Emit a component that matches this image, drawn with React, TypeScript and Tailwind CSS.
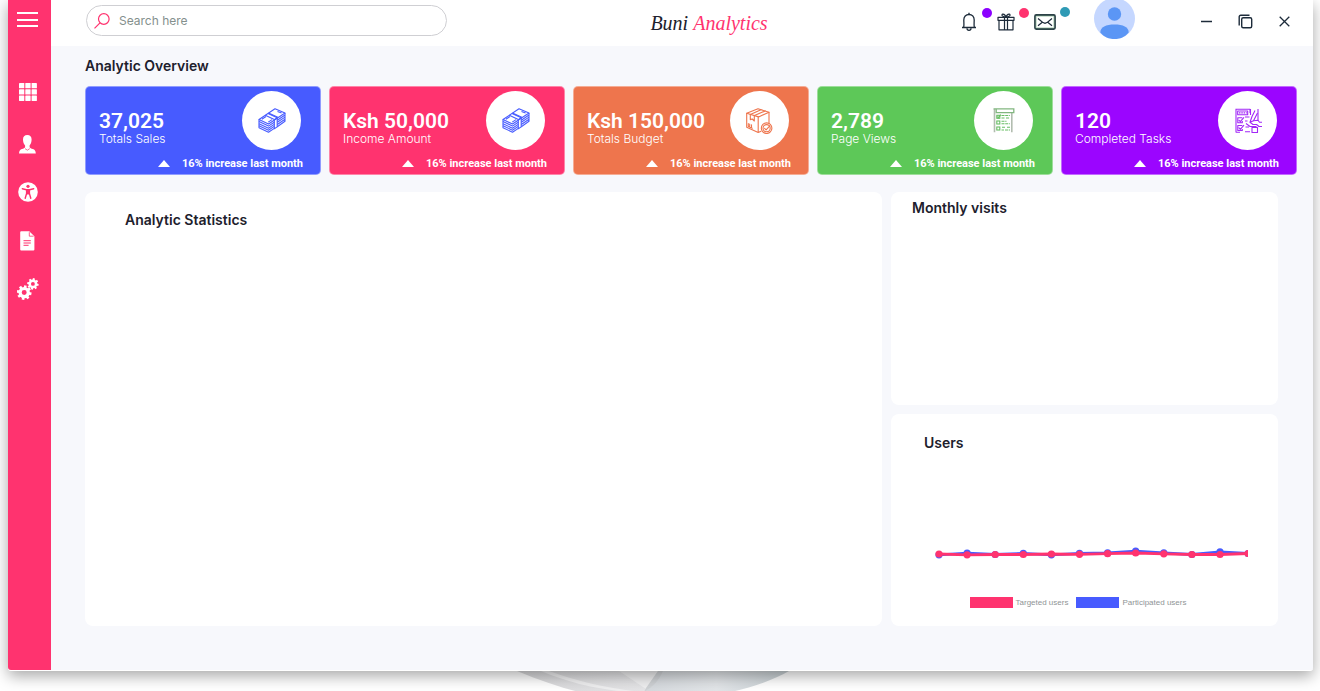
import type { ReactNode } from "react";

function MenuIcon() {
  return (
    <svg width="21" height="16" viewBox="0 0 21 16" fill="#fff" aria-hidden="true">
      <rect y="0" width="21" height="2" />
      <rect y="7" width="21" height="2" />
      <rect y="13" width="21" height="2" />
    </svg>
  );
}

function GridIcon() {
  const steps = [0, 6.3, 12.6];
  return (
    <svg width="18" height="18" viewBox="0 0 18 18" fill="#fff" aria-hidden="true">
      {steps.map((y) => steps.map((x) => <rect key={`${x}-${y}`} x={x} y={y} width="5.3" height="5.3" rx="0.4" />))}
    </svg>
  );
}

function UserIcon() {
  return (
    <svg width="17" height="19" viewBox="0 0 17 19" fill="#fff" aria-hidden="true">
      <path d="M8.3 0c2.8 0 4.3 1.7 4.3 4.4 0 2.5-.8 4.7-2 6v1.9c.4.9 1.7 1.3 3.2 1.8 1.9.6 2.9 1.7 3 4.4H0c.1-2.7 1.1-3.8 3-4.4 1.5-.5 2.7-.9 3.1-1.8v-1.9c-1.3-1.3-2.1-3.5-2.1-6C4 1.700 5.500 0 8.300 0z" />
      <path d="M6 13.600l2.400 1.600 2.400-1.600" fill="none" stroke="#ff336f" strokeWidth="0.7" />
    </svg>
  );
}

function AccessibilityIcon() {
  return (
    <svg width="20" height="20" viewBox="0 0 20 20" aria-hidden="true">
      <circle cx="10" cy="10" r="9.800" fill="#fff" />
      <circle cx="10" cy="4.300" r="1.600" fill="#ff336f" />
      <path
        d="M4.300 6.700L8.400 7.700H11.600L15.700 6.700M8.600 7.700V11.500L7.200 16.300M11.400 7.700V11.500L12.800 16.300M8.600 11.700H11.400M10 7.700V11.700"
        fill="none"
        stroke="#ff336f"
        strokeWidth="1.400"
        strokeLinecap="round"
        strokeLinejoin="round"
      />
    </svg>
  );
}

function FileIcon() {
  return (
    <svg width="15" height="20" viewBox="0 0 15 20" aria-hidden="true">
      <path d="M1.200 0.300H9.200L14.400 5.300V18.600a1 1 0 0 1-1 1H1.200a1 1 0 0 1-1-1V1.300a1 1 0 0 1 1-1z" fill="#fff" />
      <path d="M9.300 1.200V5.200H13.600" fill="none" stroke="#ff336f" strokeWidth="0.8" />
      <path d="M3.500 9.700H10.800M3.500 12H10.800M3.500 14.300H8.600" stroke="#ff336f" strokeWidth="1" />
    </svg>
  );
}

function Gear({ cx, cy, r }: { cx: number; cy: number; r: number }) {
  const angles = [0, 45, 90, 135, 180, 225, 270, 315];
  return (
    <g>
      <circle cx={cx} cy={cy} r={r * 0.56} fill="none" stroke="#fff" strokeWidth={r * 0.44} />
      {angles.map((a) => (
        <rect
          key={a}
          x={cx - r * 0.18}
          y={cy - r}
          width={r * 0.36}
          height={r * 0.36}
          fill="#fff"
          transform={`rotate(${a + 10} ${cx} ${cy})`}
        />
      ))}
    </g>
  );
}

function GearsIcon() {
  return (
    <svg width="22" height="22" viewBox="0 0 22 22" aria-hidden="true">
      <Gear cx={7.2} cy={14.6} r={7.3} />
      <Gear cx={15.9} cy={5.9} r={5.7} />
    </svg>
  );
}

function MoneyIcon() {
  return (
    <svg width="28" height="25" viewBox="0 0 28 25" fill="none" stroke="#475bff" strokeWidth="1.1" strokeLinejoin="round" aria-hidden="true">
      <path d="M1 11.500L17 0.800L27 5L10.500 16z" />
      <path d="M3.800 11.300L8 8.500M10.200 14.100L14 11.600M19.500 3.400L23.600 5.100" />
      <path d="M7.300 7.300L16.300 11.600V20.800L19.200 18.900V9.700L10 5.500" />
      <path d="M10.500 4.900L19.800 9.200M16.300 11.600L19.200 9.700" />
      <path d="M1 11.500V19.700L10.500 24.200L16.300 20.400" />
      <path d="M1 13.600L10.500 18.100L16.200 14.300M1 15.700L10.500 20.200L16.200 16.400M1 17.700L10.500 22.200L16.200 18.400" />
      <path d="M19.300 12.200L27 7V5M19.300 14.300L27 9.100V7M19.300 16.500L27 11.200V9.100M19.300 18.700L27 13.300V11.200" />
    </svg>
  );
}

function BoxIcon() {
  return (
    <svg width="27" height="26" viewBox="0 0 27 26" fill="none" stroke="#ee754d" strokeWidth="1.1" strokeLinejoin="round" strokeLinecap="round" aria-hidden="true">
      <path d="M0.700 5.300L12.600 8.900L23 4.200L12 0.700z" />
      <path d="M0.700 5.300V19.300L12.200 24.500V8.900M23 4.200V15.500M12.200 24.500L15 23.300" />
      <path d="M4.300 6.500L15 1.700M8.500 7.600L19.200 2.900M4.300 6.500V11.600L6.300 11L8.300 13V7.700" />
      <path d="M2.300 15.500V18.400L6.300 20.200M3.700 16V18.100M5.500 16.800V18.900" />
      <circle cx="20.600" cy="20.200" r="5.300" />
      <circle cx="20.600" cy="20.200" r="3.600" />
      <path d="M18.600 20.300L20.100 21.800L23.800 17.800" />
    </svg>
  );
}

function ChecklistIcon() {
  return (
    <svg width="22" height="25" viewBox="0 0 22 25" fill="none" stroke="#68bd64" strokeWidth="1.1" aria-hidden="true">
      <path d="M1.500 1V24.200M18.800 5V24.200" stroke="#b2bdb0" strokeWidth="1.600" />
      <path d="M0.500 0.800H20.800V4.600H3.200V1" stroke="#82b780" strokeWidth="1.300" />
      <rect x="3.800" y="7.300" width="3" height="3" />
      <rect x="3.800" y="13" width="3" height="3" />
      <rect x="3.800" y="19" width="3" height="3" />
      <path d="M4.200 8.600L5.300 9.700L7.900 6.600" />
      <path d="M8.500 7.500H16.800M8.500 10H12M13 10H16.800M8.500 13.200H13.500M8.500 15.800H16.800M9 19.300H12.500M14 19.300H17M8.500 22H11M12 22H17" strokeDasharray="3 0.7" />
    </svg>
  );
}

function TasksIcon() {
  return (
    <svg width="28" height="26" viewBox="0 0 28 26" fill="none" stroke="#a228f7" strokeWidth="1.1" strokeLinejoin="round" aria-hidden="true">
      <path d="M2 0.700V24.500M2 1.200H16V5M24 1V12.500M2 24.300H6M16.500 1V7" />
      <rect x="3.700" y="3" width="10" height="3.800" />
      <path d="M5 4.900H12.800" strokeDasharray="1.500 0.800" />
      <path d="M8.300 9.700H3.800V14.800H8.300V13M4.800 12L6.300 13.700L10 9.300" />
      <path d="M8.300 17.500H3.800V22.500H8.300V21M4.800 19.500L6.300 21.300L10 17.200" />
      <path d="M11 9H15.500M11 13H13.500M11 23.700H16M11.500 19H15" />
      <path d="M21 2.500L18 8.500L16 14.200L19.500 12.800L23.500 5" />
      <path d="M19.500 12.800L24 12.200L25.500 14.300H28M16 14.200L19 16.500H22.500L25 18.500H28M12 15.500L16 18.500H22.500M18 18.500V24.500H23.500V19.500H18" />
    </svg>
  );
}

function BellIcon() {
  return (
    <svg width="16" height="20" viewBox="0 0 16 20" fill="none" stroke="#1d2b3a" strokeWidth="1.300" strokeLinejoin="round" aria-hidden="true">
      <path d="M1 15.500H15M2.700 15.300C3.200 13 2.800 10.800 2.800 8C2.800 4.700 4.800 2.500 8 2.500S13.200 4.700 13.200 8C13.200 10.800 12.800 13 13.300 15.300" />
      <path d="M8 0.800V2.500M6 16.300C6 19.100 10 19.100 10 16.300" />
    </svg>
  );
}

function GiftIcon() {
  return (
    <svg width="18" height="18" viewBox="0 0 18 18" fill="none" stroke="#1d2b3a" strokeWidth="1.200" strokeLinejoin="round" aria-hidden="true">
      <rect x="1" y="4.300" width="16" height="3" />
      <path d="M2 7.500V16.800H16V7.500M7.500 4.500V16.500M10.500 4.500V16.500" />
      <path d="M9 4.300C6.500 3.800 4.500 3 5 1.700C5.600 0.200 8.300 1.500 9 4.300C9.700 1.500 12.400 0.200 13 1.700C13.500 3 11.500 3.800 9 4.300z" />
    </svg>
  );
}

function MailIcon() {
  return (
    <svg width="22" height="16" viewBox="0 0 22 16" fill="none" aria-hidden="true">
      <rect x="1" y="1" width="20" height="14" rx="1.200" stroke="#2c4247" strokeWidth="1.800" />
      <path d="M2.200 2.200H19.800V13.800H2.200z" stroke="#9fc6a8" strokeWidth="0.700" />
      <path d="M4 4.500L8.500 8.300L11 9.300L13.500 8.300L18 4.500M4 11.800L8.300 8.200M18 11.800L13.700 8.200" stroke="#1d2b3a" strokeWidth="1.200" />
    </svg>
  );
}

type IconButtonProps = { label: string; className?: string; children: ReactNode };

function IconButton({ label, className = "", children }: IconButtonProps) {
  return (
    <button type="button" aria-label={label} className={`flex items-center justify-center ${className}`}>
      {children}
    </button>
  );
}

const stats = [
  { value: "37,025", label: "Totals Sales", color: "bg-[#475bff]", icon: <MoneyIcon /> },
  { value: "Ksh 50,000", label: "Income Amount", color: "bg-[#ff336f]", icon: <MoneyIcon /> },
  { value: "Ksh 150,000", label: "Totals Budget", color: "bg-[#ee754d]", icon: <BoxIcon /> },
  { value: "2,789", label: "Page Views", color: "bg-[#5dc858]", icon: <ChecklistIcon /> },
  { value: "120", label: "Completed Tasks", color: "bg-[#9b05ff]", icon: <TasksIcon /> },
];

function StatCard({ value, label, color, icon }: (typeof stats)[number]) {
  return (
    <article className={`h-[89px] rounded-[5px] border border-white/40 bg-clip-border pt-1 pl-[13px] text-white ${color}`}>
      <div className="flex h-[59px] justify-between pr-[19px]">
        <div className="pt-[19px]">
          <p className="font-['Roboto',sans-serif] text-[21px] leading-[22px] font-semibold">{value}</p>
          <p className="text-[12px] leading-[14px] font-light">{label}</p>
        </div>
        <span className="flex size-[59px] items-center justify-center rounded-full bg-white">{icon}</span>
      </div>
      <p className="mt-[7px] flex items-center justify-end gap-3 pr-[17px] font-['Roboto',sans-serif] text-[11px] leading-[14px] font-bold">
        <svg width="12" height="7" viewBox="0 0 12 7" fill="#fff" className="mb-[2px]" aria-hidden="true">
          <path d="M6 0L12 7H0z" />
        </svg>
        16% increase last month
      </p>
    </article>
  );
}

const targeted = [11, 11.8, 11.5, 11.5, 11, 11.3, 10.7, 10, 10.8, 11.5, 11.5, 10.5];
const participated = [11.8, 10.2, 11.5, 10.3, 11.8, 10.4, 9.8, 8.1, 9.8, 11.5, 8.9, 10.5];

function Series({ values, color }: { values: number[]; color: string }) {
  const points = values.map((y, i) => ({ x: 4 + i * 28.1, y }));
  return (
    <g>
      <polyline points={points.map((p) => `${p.x},${p.y}`).join(" ")} fill="none" stroke={color} strokeWidth="2.8" />
      {points.map((p) => (
        <circle key={p.x} cx={p.x} cy={p.y} r="3.6" fill={color} />
      ))}
    </g>
  );
}

function UsersChart() {
  return (
    <svg viewBox="0 0 313 24" className="block w-full" role="img" aria-label="Targeted and participated users">
      <Series values={participated} color="#475bff" />
      <Series values={targeted} color="#ff336f" />
    </svg>
  );
}

export default function App() {
  return (
    <div className="min-h-screen overflow-hidden bg-white pr-[7px] pl-2 font-['Inter',sans-serif] text-[#20202c]">
      <div className="relative z-10 flex rounded-b-[3px] border-b border-white bg-[#f7f8fc] shadow-[0_5px_15px_rgba(0,0,0,0.35)]">
        <nav aria-label="Main" className="flex w-[43px] shrink-0 flex-col rounded-bl-[3px] bg-[#ff336f] pr-1">
          <IconButton label="Menu" className="mb-6 h-10">
            <MenuIcon />
          </IconButton>
          <IconButton label="Dashboard" className="h-14">
            <GridIcon />
          </IconButton>
          <IconButton label="Profile" className="h-12">
            <UserIcon />
          </IconButton>
          <IconButton label="Accessibility" className="h-12">
            <AccessibilityIcon />
          </IconButton>
          <IconButton label="Reports" className="h-[49px]">
            <FileIcon />
          </IconButton>
          <IconButton label="Settings" className="h-12">
            <GearsIcon />
          </IconButton>
        </nav>

        <div className="min-w-0 flex-1">
          <header className="flex h-[46px] justify-between overflow-hidden bg-white pr-[23px] pl-[35px]">
            <label className="mt-[5px] flex h-[31px] w-[361px] items-center gap-2 rounded-full border border-[#cfcfd3] pl-[7px]">
              <svg width="16" height="16" viewBox="0 0 16 16" fill="none" stroke="#ff336f" strokeWidth="1.2" className="shrink-0" aria-hidden="true">
                <circle cx="9.800" cy="6" r="5.300" />
                <path d="M6 9.800L0.500 15.400" />
              </svg>
              <input
                type="search"
                aria-label="Search"
                placeholder="Search here"
                className="w-full bg-transparent pl-px text-[12px] leading-5 outline-none placeholder:text-[#84908d]"
              />
            </label>

            <h1 className="flex h-[46px] items-center pl-[10px] font-['Liberation_Serif',serif] text-[20px] whitespace-nowrap italic">
              Buni&nbsp;<span className="text-[#ff336f]">Analytics</span>
            </h1>

            <div className="flex h-[43px] items-center">
              <IconButton label="Notifications" className="relative mr-5">
                <BellIcon />
                <span className="absolute -top-1 -right-[15px] size-[10px] rounded-full bg-[#8b00ff]" />
              </IconButton>
              <IconButton label="Gifts" className="relative mr-[19px]">
                <GiftIcon />
                <span className="absolute -top-[5px] -right-[14px] size-[10px] rounded-full bg-[#ff336f]" />
              </IconButton>
              <IconButton label="Messages" className="relative mr-[38px]">
                <MailIcon />
                <span className="absolute -top-[7px] -right-[14px] size-[10px] rounded-full bg-[#2f9ab5]" />
              </IconButton>
              <IconButton label="Account" className="mr-[66px] pb-[6px]">
                <svg width="41" height="41" viewBox="0 0 41 41" aria-hidden="true">
                  <circle cx="20.500" cy="20.500" r="20.500" fill="#c5d7ff" />
                  <circle cx="20.500" cy="16" r="6.700" fill="#5b96f5" />
                  <path d="M6.300 34.500C6.300 29 12 26.500 20.500 26.500S34.700 29 34.700 34.500C31 39 26 41 20.500 41S10 39 6.300 34.500z" fill="#5b96f5" />
                </svg>
              </IconButton>
              <div className="flex items-center gap-[26px] text-[#1d2b3a]">
                <IconButton label="Minimize">
                  <svg width="11" height="11" viewBox="0 0 11 11" stroke="currentColor" strokeWidth="1.5" aria-hidden="true">
                    <path d="M0 5.500H11" />
                  </svg>
                </IconButton>
                <IconButton label="Restore">
                  <svg width="15" height="15" viewBox="0 0 15 15" fill="none" stroke="currentColor" strokeWidth="1.4" aria-hidden="true">
                    <rect x="3.700" y="3.700" width="10" height="10" rx="1.500" />
                    <path d="M1.200 11.500V2.700A1.500 1.500 0 0 1 2.700 1.200H11.500" />
                  </svg>
                </IconButton>
                <IconButton label="Close">
                  <svg width="11" height="11" viewBox="0 0 11 11" stroke="currentColor" strokeWidth="1.3" aria-hidden="true">
                    <path d="M0.700 0.700L10.300 10.300M10.300 0.700L0.700 10.300" />
                  </svg>
                </IconButton>
              </div>
            </div>
          </header>

          <main className="pt-[10px] pr-4 pb-11 pl-[34px]">
            <h2 className="mb-[10px] text-[14px] leading-5 font-semibold">Analytic Overview</h2>
            <section className="grid grid-cols-5 gap-2">
              {stats.map((stat) => (
                <StatCard key={stat.label} {...stat} />
              ))}
            </section>

            <div className="mt-[17px] mr-[19px] grid grid-cols-[797fr_387fr] gap-[9px]">
              <section className="rounded-lg bg-white pt-[18px] pl-10">
                <h2 className="text-[14px] leading-5 font-semibold">Analytic Statistics</h2>
              </section>
              <div className="flex flex-col gap-[9px]">
                <section className="min-h-[213px] rounded-lg bg-white pt-[6px] pl-[21px]">
                  <h2 className="text-[14px] leading-5 font-semibold">Monthly visits</h2>
                </section>
                <section className="rounded-lg bg-white pt-[19px] pr-[30px] pb-[17px] pl-[33px]">
                  <h2 className="text-[14px] leading-5 font-semibold">Users</h2>
                  <div className="mt-[90px] pl-[11px]">
                    <UsersChart />
                  </div>
                  <ul className="mt-[30px] flex justify-center gap-2 pr-4 font-['Liberation_Sans',sans-serif] text-[8px] leading-[12px] text-[#8f9496]">
                    <li className="flex gap-[3px]">
                      <span className="h-[11px] w-[43px] bg-[#ff336f]" />
                      Targeted users
                    </li>
                    <li className="flex gap-[3px]">
                      <span className="h-[11px] w-[43px] bg-[#475bff]" />
                      Participated users
                    </li>
                  </ul>
                </section>
              </div>
            </div>
          </main>
        </div>
      </div>

      <div className="flex h-[21px] justify-center overflow-hidden pr-2">
        <svg width="280" height="21" viewBox="0 0 280 21" aria-hidden="true">
          <defs>
            <linearGradient id="petal-left" x1="0" y1="0" x2="1" y2="0">
              <stop offset="0" stopColor="#d8d8da" />
              <stop offset="1" stopColor="#e6e6e8" />
            </linearGradient>
            <linearGradient id="petal-right" x1="0" y1="0" x2="1" y2="0">
              <stop offset="0" stopColor="#d5d9dd" />
              <stop offset="0.5" stopColor="#e2e5e8" />
              <stop offset="1" stopColor="#c6ced2" />
            </linearGradient>
          </defs>
          <path d="M0 0C22 9 42 16 62 21H134L145 0z" fill="url(#petal-left)" />
          <path d="M32 0C56 9 88 17 124 21H112C76 18 48 10 24 0z" fill="#efeff0" />
          <path d="M102 0L129 18L141 0z" fill="#efeff0" />
          <path d="M145 0C141 9 136 15 127 21H214C240 15 258 8 272 0z" fill="url(#petal-right)" />
          <path d="M141 0H146C142 9 137 15 127 21L129 17z" fill="#cfd2d5" />
        </svg>
      </div>
    </div>
  );
}
